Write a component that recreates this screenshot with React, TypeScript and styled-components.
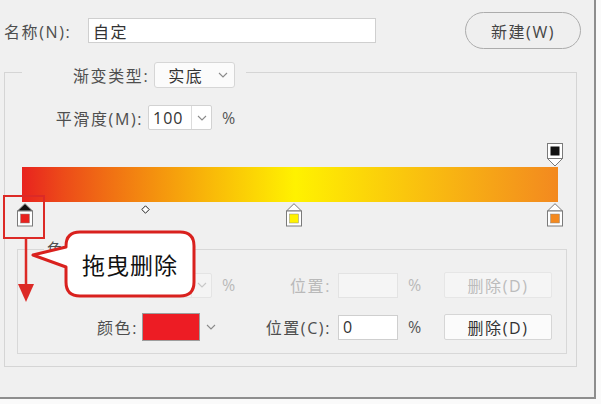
import React from 'react';
import styled, { createGlobalStyle } from 'styled-components';

const Global = createGlobalStyle`
  html, body { margin: 0; padding: 0; background: #fafafa; }
  *, *::before, *::after { box-sizing: border-box; }
  body { font-family: "Open Sans", "Noto Sans CJK SC", sans-serif; }
`;

const Dialog = styled.div`
  position: relative;
  width: 596px;
  height: 399px;
  background: #f0f0f0;
  border-right: 2px solid #8e8e8e;
  border-bottom: 2px solid #8e8e8e;
  padding: 12px 13px 0 4px;
  font-size: 16px;
  letter-spacing: 1.6px;
  color: #4e4e4e;
`;

const TopRow = styled.div`
  display: flex;
  align-items: center;
  height: 37px;
`;

const NameLabel = styled.span`
  width: 84px;
  white-space: nowrap;
`;

const TextBox = styled.div<{ $w: number; $disabled?: boolean }>`
  width: ${p => p.$w}px;
  height: 25px;
  display: flex;
  align-items: center;
  padding-left: 4px;
  background: ${p => (p.$disabled ? '#f5f5f5' : '#ffffff')};
  border: 1px solid ${p => (p.$disabled ? '#e3e3e3' : '#cfcfcf')};
  color: #333;
`;

const PillButton = styled.button`
  margin-left: auto;
  width: 116px;
  height: 37px;
  border-radius: 19px;
  border: 1px solid #acacac;
  background: #efefef;
  font: inherit;
  letter-spacing: 1.6px;
  color: #444;
  padding: 0;
`;

const Group = styled.fieldset`
  margin: 7px 4px 0 0;
  padding: 0 9px 12px 12px;
  border: 1px solid #d5d5d5;
  min-width: 0;
`;

const TypeLegend = styled.legend`
  margin-left: 5px;
  padding: 6px 11px 0 51px;
  display: flex;
  align-items: center;
  gap: 5px;
`;

const Select = styled.div<{ $w: number }>`
  width: ${p => p.$w}px;
  height: 26px;
  display: flex;
  align-items: center;
  justify-content: space-between;
  padding: 0 6px 0 13px;
  background: #fbfbfb;
  border: 1px solid #d6d6d6;
  border-radius: 3px;
  color: #333;
`;

const Combo = styled.div<{ $disabled?: boolean }>`
  display: flex;
  width: 64px;
  height: 25px;
  background: ${p => (p.$disabled ? '#f4f4f4' : '#ffffff')};
  border: 1px solid ${p => (p.$disabled ? '#e4e4e4' : '#d2d2d2')};
  border-radius: 2px;
`;

const ComboValue = styled.span<{ $disabled?: boolean }>`
  flex: 1;
  display: flex;
  align-items: center;
  padding-left: 4px;
  letter-spacing: 1px;
  color: #333;
  border-right: 1px solid ${p => (p.$disabled ? '#e8e8e8' : '#dcdcdc')};
`;

const ComboArrow = styled.span`
  width: 19px;
  display: flex;
  align-items: center;
  justify-content: center;
`;

const SmoothRow = styled.div`
  display: flex;
  align-items: center;
  margin-top: 17px;
`;

const RowLabel = styled.span`
  width: 131px;
  padding-right: 5px;
  text-align: right;
  white-space: nowrap;
`;

const Percent = styled.span<{ $disabled?: boolean; $pad: number }>`
  padding-left: ${p => p.$pad}px;
  color: ${p => (p.$disabled ? '#b9b9b9' : '#555')};
`;

const Editor = styled.div`
  margin-top: 13px;
`;

const StopTrack = styled.div<{ $h: number }>`
  position: relative;
  height: ${p => p.$h}px;
`;

const Bar = styled.div`
  margin-left: 5px;
  width: 536px;
  height: 35px;
  background: linear-gradient(90deg, #e8231f 0%, 23%, #fff200 51%, #f3891f 100%);
`;

const StopSlot = styled.div<{ $top: number }>`
  position: absolute;
  top: ${p => p.$top}px;
  width: 16px;
  height: 24px;
  line-height: 0;
`;

const StopGroup = styled.fieldset`
  margin: 12px 0 0 0;
  padding: 12px 0 12px 0;
  border: 1px solid #d8d8d8;
  min-width: 0;
`;

const StopLegend = styled.legend`
  margin-left: 26px;
  padding: 0 3px;
  line-height: 20px;
`;

const StopGrid = styled.div`
  display: grid;
  grid-template-columns: 124px 76px 44px 72px 68px 42px 108px;
  grid-auto-rows: 28px;
  row-gap: 14px;
  align-items: center;
`;

const CellLabel = styled.span<{ $disabled?: boolean; $pad: number; $tight?: boolean }>`
  text-align: right;
  padding-right: ${p => p.$pad}px;
  white-space: nowrap;
  letter-spacing: ${p => (p.$tight ? '0' : '1.6px')};
  color: ${p => (p.$disabled ? '#b9b9b9' : '#4e4e4e')};
`;

const CellControl = styled.div<{ $pad: number }>`
  display: flex;
  align-items: center;
  gap: 6px;
  padding-left: ${p => p.$pad}px;
`;

const Swatch = styled.div<{ $color: string }>`
  width: 58px;
  height: 28px;
  background: ${p => p.$color};
  border: 1px solid #9d9d9d;
`;

const SmallButton = styled.button<{ $disabled?: boolean }>`
  width: 108px;
  height: 26px;
  padding: 0;
  font: inherit;
  letter-spacing: 1.6px;
  border-radius: 2px;
  background: ${p => (p.$disabled ? '#f5f5f5' : '#fbfbfb')};
  border: 1px solid ${p => (p.$disabled ? '#e6e6e6' : '#d6d6d6')};
  color: ${p => (p.$disabled ? '#bcbcbc' : '#333')};
`;

const Highlight = styled.div`
  position: absolute;
  left: 3px;
  top: 195px;
  width: 42px;
  height: 44px;
  border: 2px solid #dc2a26;
`;

const ArrowMark = styled.svg`
  position: absolute;
  left: 16px;
  top: 238px;
`;

const Callout = styled.div`
  position: absolute;
  left: 30px;
  top: 228px;
  width: 168px;
  height: 72px;
`;

const CalloutText = styled.div`
  position: absolute;
  left: 36px;
  top: 4px;
  width: 128px;
  height: 64px;
  display: flex;
  align-items: center;
  justify-content: center;
  font-family: "Noto Sans CJK SC", sans-serif;
  font-size: 23px;
  font-weight: 400;
  letter-spacing: 1px;
  color: #111;
`;

const Chevron = ({ color = '#8a8a8a' }: { color?: string }) => (
  <svg width="10" height="6" viewBox="0 0 10 6">
    <polyline points="1,1 5,5 9,1" fill="none" stroke={color} strokeWidth="1.1" />
  </svg>
);

const ColorStop = ({ color, selected }: { color: string; selected?: boolean }) => (
  <svg width="16" height="24" viewBox="0 0 16 24">
    <polygon points="8,0.7 15.5,8 0.5,8" fill={selected ? '#111' : '#fff'} stroke="#7a7a7a" strokeWidth="1" />
    <rect x="0.5" y="8" width="15" height="15" fill="#fff" stroke="#7a7a7a" strokeWidth="1" />
    <rect x="3.5" y="11" width="9" height="9" fill={color} stroke="#8a8a8a" strokeWidth="0.5" />
  </svg>
);

const OpacityStop = () => (
  <svg width="16" height="24" viewBox="0 0 16 24">
    <rect x="0.5" y="0.5" width="15" height="15" fill="#fff" stroke="#7a7a7a" strokeWidth="1" />
    <rect x="3.5" y="3.5" width="9" height="9" fill="#111" />
    <polygon points="0.5,15.5 15.5,15.5 8,23" fill="#fff" stroke="#7a7a7a" strokeWidth="1" />
  </svg>
);

const Diamond = () => (
  <svg width="9" height="9" viewBox="0 0 9 9">
    <polygon points="4.5,0.8 8.2,4.5 4.5,8.2 0.8,4.5" fill="#fff" stroke="#222" strokeWidth="1" />
  </svg>
);

const TRACK = 530;
const colorStops = [
  { pos: 0, color: '#e8221e', selected: true },
  { pos: 0.508, color: '#fff200', selected: false },
  { pos: 1, color: '#f3891f', selected: false },
];
const midpoints = [0.228];

export default function App() {
  return (
    <>
      <Global />
      <Dialog>
        <TopRow>
          <NameLabel>名称(N):</NameLabel>
          <TextBox $w={288}>自定</TextBox>
          <PillButton>新建(W)</PillButton>
        </TopRow>

        <Group>
          <TypeLegend>
            <span>渐变类型:</span>
            <Select $w={81}>
              <span>实底</span>
              <Chevron />
            </Select>
          </TypeLegend>

          <SmoothRow>
            <RowLabel>平滑度(M):</RowLabel>
            <Combo>
              <ComboValue>100</ComboValue>
              <ComboArrow><Chevron /></ComboArrow>
            </Combo>
            <Percent $pad={10}>%</Percent>
          </SmoothRow>

          <Editor>
            <StopTrack $h={24}>
              <StopSlot $top={0} style={{ left: TRACK }}>
                <OpacityStop />
              </StopSlot>
            </StopTrack>
            <Bar />
            <StopTrack $h={25}>
              {colorStops.map((s, i) => (
                <StopSlot key={i} $top={1} style={{ left: s.pos * TRACK }}>
                  <ColorStop color={s.color} selected={s.selected} />
                </StopSlot>
              ))}
              {midpoints.map((m, i) => (
                <StopSlot key={'m' + i} $top={3} style={{ left: 8 + m * TRACK - 4.5 }}>
                  <Diamond />
                </StopSlot>
              ))}
            </StopTrack>
          </Editor>

          <StopGroup>
            <StopLegend>色标</StopLegend>
            <StopGrid>
              <CellLabel $disabled $tight $pad={6}>不透明度:</CellLabel>
              <CellControl $pad={6}>
                <Combo $disabled>
                  <ComboValue $disabled />
                  <ComboArrow><Chevron color="#c8c8c8" /></ComboArrow>
                </Combo>
              </CellControl>
              <Percent $disabled $pad={4}>%</Percent>
              <CellLabel $disabled $pad={3}>位置:</CellLabel>
              <CellControl $pad={4}>
                <TextBox $w={60} $disabled />
              </CellControl>
              <Percent $disabled $pad={6}>%</Percent>
              <SmallButton $disabled>删除(D)</SmallButton>

              <CellLabel $pad={4}>颜色:</CellLabel>
              <CellControl $pad={0}>
                <Swatch $color="#ed1c24" />
                <Chevron />
              </CellControl>
              <span />
              <CellLabel $pad={3}>位置(C):</CellLabel>
              <CellControl $pad={4}>
                <TextBox $w={60}>0</TextBox>
              </CellControl>
              <Percent $pad={6}>%</Percent>
              <SmallButton>删除(D)</SmallButton>
            </StopGrid>
          </StopGroup>
        </Group>

        <Highlight />
        <ArrowMark width="20" height="66" viewBox="0 0 20 66">
          <line x1="10" y1="0" x2="10" y2="50" stroke="#dc2a26" strokeWidth="2.5" />
          <polygon points="2,46 18,46 10,64" fill="#dc2a26" />
        </ArrowMark>
        <Callout>
          <svg width="168" height="72" viewBox="0 0 168 72">
            <path
              d="M 50 4 H 150 Q 164 4 164 18 V 54 Q 164 68 150 68 H 50 Q 36 68 36 54 V 39 L 3 27 L 36 19 V 18 Q 36 4 50 4 Z"
              fill="#fff"
              stroke="#d9211e"
              strokeWidth="3"
              strokeLinejoin="round"
            />
          </svg>
          <CalloutText>拖曳删除</CalloutText>
        </Callout>
      </Dialog>
    </>
  );
}
